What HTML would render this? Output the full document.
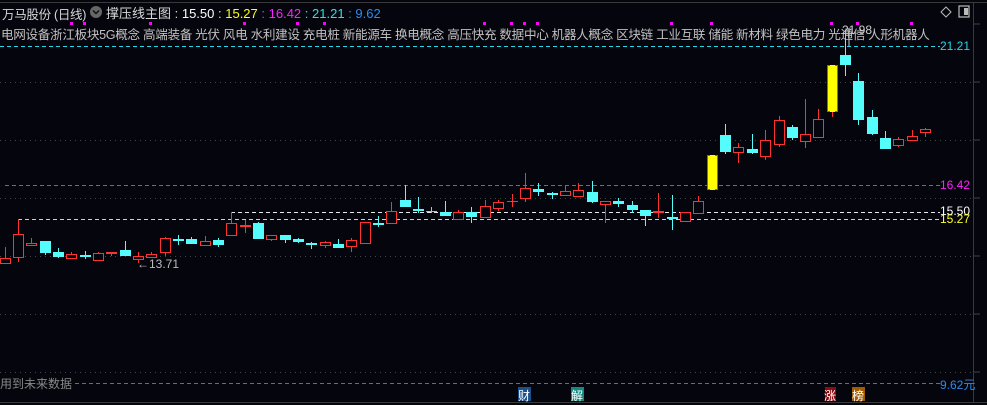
<!DOCTYPE html>
<html><head><meta charset="utf-8"><style>
html,body{margin:0;padding:0;background:#05050d;width:987px;height:405px;overflow:hidden}
body{position:relative;font-family:"Liberation Sans","Noto Sans CJK SC",sans-serif}
.t{position:absolute;white-space:nowrap}
</style></head><body>
<svg id="s" width="987" height="405" style="position:absolute;left:0;top:0">
<line x1="0" y1="2.5" x2="987" y2="2.5" stroke="#3a3a3a"/>
<line x1="973.5" y1="2" x2="973.5" y2="402" stroke="#3a3a3a"/>
<line x1="0" y1="402.5" x2="987" y2="402.5" stroke="#3a3a3a"/>
<g stroke="#444" stroke-dasharray="1,4">
<line x1="0" y1="82.5" x2="972" y2="82.5"/><line x1="0" y1="140.5" x2="972" y2="140.5"/>
<line x1="0" y1="198.5" x2="972" y2="198.5"/><line x1="0" y1="256.5" x2="972" y2="256.5"/>
<line x1="0" y1="314.5" x2="972" y2="314.5"/><line x1="0" y1="372.5" x2="972" y2="372.5"/>
</g>
<g stroke="#444"><line x1="973" y1="24" x2="980" y2="24"/><line x1="973" y1="82" x2="980" y2="82"/><line x1="973" y1="140" x2="980" y2="140"/><line x1="973" y1="198" x2="980" y2="198"/><line x1="973" y1="256" x2="980" y2="256"/><line x1="973" y1="314" x2="980" y2="314"/><line x1="973" y1="372" x2="980" y2="372"/></g>
<g stroke-dasharray="4,3">
<line x1="0" y1="46.5" x2="940" y2="46.5" stroke="#22d8e8"/>
<line x1="5" y1="185.5" x2="940" y2="185.5" stroke="#e020e0"/>
<line x1="231" y1="212.5" x2="940" y2="212.5" stroke="#e8e8e8"/>
<line x1="18" y1="219.5" x2="940" y2="219.5" stroke="#e8e820"/>
<line x1="75" y1="383.5" x2="940" y2="383.5" stroke="#1e7ee8"/>
</g>
<g id="c"></g>
<g fill="#ff00ff"><rect x="70" y="22" width="3" height="3"/><rect x="83" y="22" width="3" height="3"/><rect x="149" y="22" width="3" height="3"/><rect x="243" y="22" width="3" height="3"/><rect x="296" y="22" width="3" height="3"/><rect x="323" y="22" width="3" height="3"/><rect x="483" y="22" width="3" height="3"/><rect x="510" y="22" width="3" height="3"/><rect x="523" y="22" width="3" height="3"/><rect x="536" y="22" width="3" height="3"/><rect x="670" y="22" width="3" height="3"/><rect x="710" y="22" width="3" height="3"/><rect x="830" y="22" width="3" height="3"/><rect x="856" y="22" width="3" height="3"/><rect x="910" y="22" width="3" height="3"/></g>
<path d="M946 7 L951 12 L946 17 L941 12 Z" fill="none" stroke="#bbb"/>
<rect x="959" y="6" width="10" height="11" fill="none" stroke="#bbb" stroke-width="1.2"/><rect x="964" y="8" width="4" height="7" fill="#bbb"/>
<circle cx="96" cy="12" r="6" fill="#666"/><path d="M93 10.5 L96 13.5 L99 10.5" fill="none" stroke="#111" stroke-width="1.5"/>
<line x1="849" y1="28" x2="849" y2="46" stroke="#ccc"/>
<rect x="518" y="387" width="13" height="14" fill="#1a4f8a"/><rect x="571" y="387" width="13" height="14" fill="#138a80"/>
<rect x="825" y="387" width="11" height="14" fill="#8a0c10"/><rect x="852" y="387" width="13" height="14" fill="#a05a00"/>
</svg>
<div class="t" style="left:2px;top:4px;font-size:12.5px;color:#d8d8d8;letter-spacing:-0.3px">万马股份 (日线)</div>
<div class="t" style="left:106px;top:3px;font-size:13px;color:#d8d8d8">撑压线主图 : <span style="color:#fff">15.50</span> <span style="color:#ffff20">: 15.27</span> <span style="color:#ff20ff">: 16.42</span> <span style="color:#20e8e8">: 21.21</span> <span style="color:#2a8cf0">: 9.62</span></div>
<div class="t" style="left:1px;top:24px;font-size:12.6px;color:#c0c0c0;letter-spacing:-0.33px">电网设备浙江板块5G概念 高端装备 光伏 风电 水利建设 充电桩 新能源车 换电概念 高压快充 数据中心 机器人概念 区块链 工业互联 储能 新材料 绿色电力 光通信 人形机器人</div>
<div class="t" style="left:842px;top:23px;font-size:12px;color:#ccc">21.98</div>
<div class="t" style="left:940px;top:39px;font-size:12px;color:#22d8e8">21.21</div>
<div class="t" style="left:940px;top:178px;font-size:12px;color:#ff20ff">16.42</div>
<div class="t" style="left:940px;top:204px;font-size:12px;color:#fff">15.50</div>
<div class="t" style="left:940px;top:212px;font-size:12px;color:#ffff20">15.27</div>
<div class="t" style="left:940px;top:376px;font-size:12px;color:#2a8cf0">9.62元</div>
<div class="t" style="left:137px;top:257px;font-size:12px;color:#bbb">←13.71</div>
<div class="t" style="left:0px;top:375px;font-size:12px;color:#888">用到未来数据</div>
<div class="t" style="left:518px;top:387px;font-size:12px;color:#fff">财</div>
<div class="t" style="left:571px;top:387px;font-size:12px;color:#fff">解</div>
<div class="t" style="left:824px;top:387px;font-size:12px;color:#fff">涨</div>
<div class="t" style="left:852px;top:387px;font-size:12px;color:#fff">榜</div>
<script>
var d=[[5,'r',258,263,247,263],[18,'r',234,257,219,262],[31,'r',243,245,238,245],[45,'c',241,253,241,255],[58,'c',252,257,248,258],[71,'r',254,258,252,258],[85,'c',255,257,251,259],[98,'r',253,260,252,260],[111,'rf',252,254,252,256],[125,'c',250,256,241,256],[138,'r',256,259,252,263],[151,'r',254,257,252,257],[165,'r',238,252,237,256],[178,'c',239,241,235,245],[191,'c',239,244,237,244],[205,'r',241,245,236,246],[218,'c',240,245,238,247],[231,'r',223,235,212,235],[245,'r',225,226,220,233],[258,'c',223,239,222,239],[271,'r',235,239,235,241],[285,'c',235,240,235,243],[298,'c',239,242,238,243],[311,'c',243,245,242,249],[325,'r',242,245,241,248],[338,'c',244,248,239,248],[351,'r',240,246,238,252],[365,'r',222,243,222,243],[378,'c',223,225,216,227],[391,'r',211,223,202,223],[405,'c',200,207,185,207],[418,'c',209,211,197,213],[431,'g',211,212,207,213],[445,'c',212,216,201,216],[458,'r',212,219,210,219],[471,'c',212,217,207,223],[485,'r',206,217,200,217],[498,'r',202,208,200,211],[512,'rf',201,202,194,207],[525,'r',188,198,173,202],[538,'c',189,192,183,196],[552,'c',193,195,192,199],[565,'r',191,195,186,196],[578,'r',190,196,183,197],[592,'c',192,202,181,203],[605,'r',201,204,201,223],[618,'c',201,204,198,207],[632,'c',205,210,201,213],[645,'c',210,216,210,226],[658,'rf',211,213,193,218],[672,'c',217,219,195,230],[685,'r',212,221,212,222],[698,'r',201,213,196,213],[712,'y',155,190,155,190],[725,'c',135,152,124,154],[738,'r',147,152,143,163],[752,'c',149,153,134,154],[765,'r',140,156,130,160],[779,'r',120,144,116,147],[792,'c',127,138,125,140],[805,'r',134,141,99,148],[818,'r',119,137,109,137],[832,'y',65,112,65,117],[845,'c',55,65,30,76],[858,'c',81,120,73,125],[872,'c',117,134,110,135],[885,'c',138,149,131,149],[898,'r',139,145,137,147],[912,'r',136,140,130,140],[925,'r',129,132,128,137]];
var g=document.getElementById('c'),h='';
d.forEach(function(a){var x=a[0],t=a[1],col=t=='c'?'#54fcfc':t=='g'?'#bbb':'#ff3232';
h+='<line x1="'+(x+.5)+'" y1="'+a[4]+'" x2="'+(x+.5)+'" y2="'+a[5]+'" stroke="'+col+'"/>';
var hh=Math.max(a[3]-a[2],1);
if(t=='c'||t=='g'||t=='rf')h+='<rect x="'+(x-5)+'" y="'+a[2]+'" width="11" height="'+hh+'" fill="'+col+'"/>';
else if(t=='y')h+='<rect x="'+(x-4.5)+'" y="'+(a[2]+.5)+'" width="10" height="'+(hh-1)+'" fill="#ffff00" stroke="#ff3232"/><rect x="'+(x-2)+'" y="'+a[2]+'" width="5" height="'+hh+'" fill="#ffff00"/>';
else h+='<rect x="'+(x-4.5)+'" y="'+(a[2]+.5)+'" width="10" height="'+hh+'" fill="#05050d" stroke="#ff3232"/>';});
g.innerHTML=h;
</script>
</body></html>
